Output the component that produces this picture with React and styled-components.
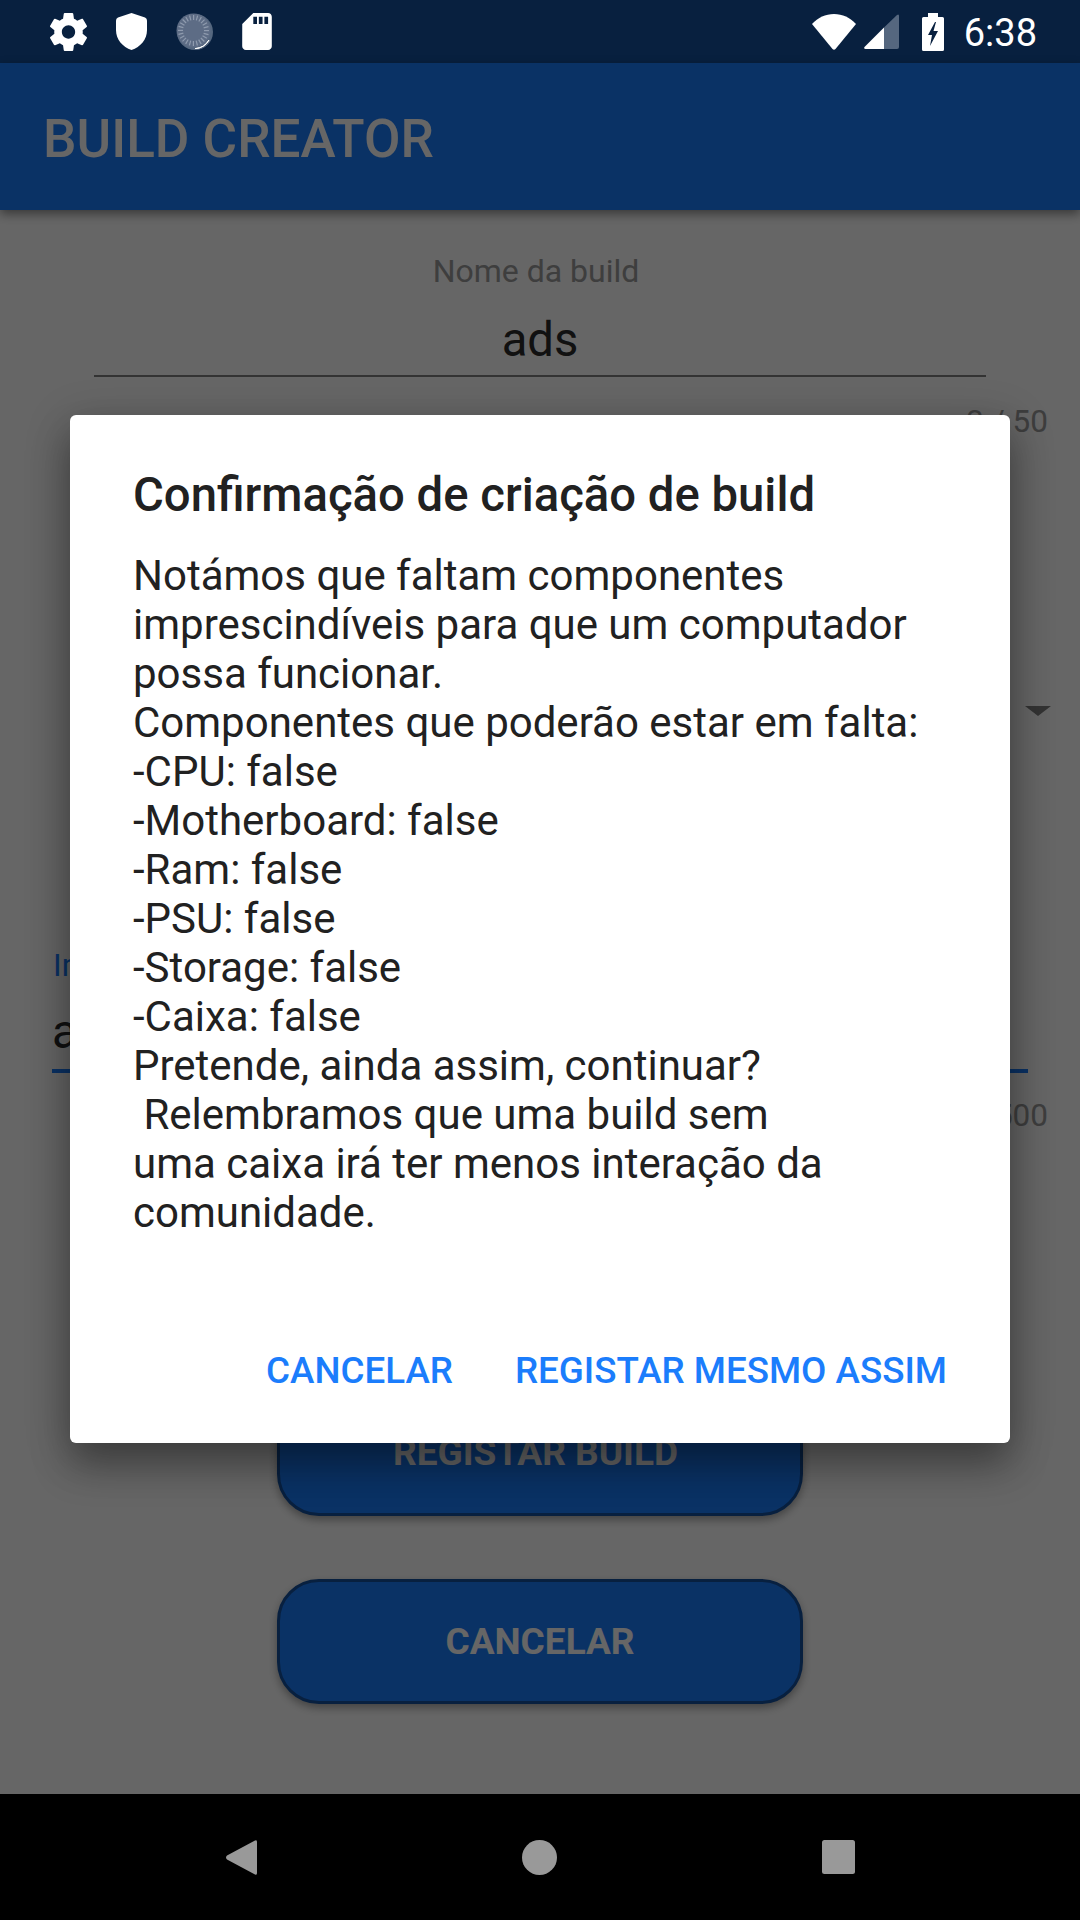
import React from 'react';
import styled, { createGlobalStyle } from 'styled-components';

const GlobalStyle = createGlobalStyle`
  html, body {
    margin: 0;
    padding: 0;
    background: #000;
  }
  * {
    box-sizing: border-box;
  }
`;

const Screen = styled.div`
  width: 1080px;
  height: 1920px;
  display: flex;
  flex-direction: column;
  overflow: hidden;
  font-family: Roboto, "Liberation Sans", sans-serif;
`;

const StatusBar = styled.div`
  height: 63px;
  flex: none;
  display: flex;
  align-items: center;
  justify-content: space-between;
  padding: 0 43px 0 50px;
  background: #08203f;
`;

const IconGroup = styled.div`
  display: flex;
  align-items: center;
  gap: ${(p) => p.$gap}px;
  margin-left: ${(p) => p.$offset || 0}px;
`;

const Clock = styled.span`
  margin-left: 20px;
  padding-top: 3px;
  color: #fff;
  font-size: 38px;
  line-height: 60px;
`;

const Content = styled.div`
  position: relative;
  flex: 1;
  display: flex;
  flex-direction: column;
  background: #fff;
`;

const AppBar = styled.header`
  height: 147px;
  flex: none;
  display: flex;
  align-items: center;
  padding: 4px 0 0 43px;
  background: #1b7dfc;
  color: #fff;
  font-size: 53px;
  font-weight: 500;
  box-shadow: 0 4px 10px rgba(0, 0, 0, 0.45);
`;

const Form = styled.main`
  flex: 1;
  display: flex;
  flex-direction: column;
  padding-top: 41px;
`;

const FieldLabel = styled.label`
  display: block;
  font-size: 32px;
  line-height: 40px;
  color: ${(p) => (p.$focused ? '#1b7dfc' : '#9b9b9b')};
  text-align: ${(p) => (p.$focused ? 'left' : 'center')};
  padding: ${(p) => (p.$focused ? '0 0 0 53px' : '0 8px 0 0')};
`;

const InputValue = styled.div`
  margin: ${(p) => (p.$focused ? '20px 52px 0' : '20px 94px 0')};
  height: ${(p) => (p.$focused ? '68px' : '66px')};
  line-height: ${(p) => (p.$focused ? '55px' : '58px')};
  font-size: 47.25px;
  color: #2b2b2b;
  text-align: ${(p) => (p.$focused ? 'left' : 'center')};
  border-bottom: ${(p) => (p.$focused ? '4px solid #1b7dfc' : '2px solid #808080')};
`;

const Counter = styled.div`
  margin-top: ${(p) => (p.$tight ? '23px' : '25px')};
  padding-right: 32px;
  text-align: right;
  font-size: 31.5px;
  line-height: 40px;
  color: #9b9b9b;
`;

const SelectRow = styled.div`
  height: 60px;
  margin: 239px 0 204px;
  display: flex;
  align-items: center;
  justify-content: flex-end;
  padding-right: 29px;
`;

const SelectArrow = styled.span`
  width: 0;
  height: 0;
  border-left: 13px solid transparent;
  border-right: 13px solid transparent;
  border-top: 10px solid #808080;
`;

const Actions = styled.div`
  display: flex;
  flex-direction: column;
  align-items: center;
  gap: 63px;
  margin-top: 255px;
`;

const PrimaryButton = styled.button`
  width: 526px;
  height: 125px;
  padding: ${(p) => (p.$shifted ? '0 9px 2px 0' : '0')};
  border: 3px solid #14509f;
  border-radius: 42px;
  background: #1b7dfc;
  color: #fff;
  font-family: inherit;
  font-size: 37px;
  font-weight: 700;
  box-shadow: 0 4px 8px rgba(0, 0, 0, 0.35);
`;

const Scrim = styled.div`
  position: absolute;
  inset: 0;
  display: flex;
  align-items: center;
  justify-content: center;
  background: rgba(0, 0, 0, 0.6);
`;

const Dialog = styled.section`
  width: 940px;
  height: 1028px;
  display: flex;
  flex-direction: column;
  padding: 48px 63px 0 63px;
  background: #fff;
  border-radius: 6px;
  box-shadow: 0 24px 38px rgba(0, 0, 0, 0.28), 0 9px 46px rgba(0, 0, 0, 0.24);
`;

const DialogTitle = styled.h2`
  margin: 0;
  font-size: 47.25px;
  line-height: 64px;
  font-weight: 500;
  color: #212121;
`;

const DialogBody = styled.p`
  margin: 24px 0 0;
  flex: 1;
  font-size: 42px;
  line-height: 49px;
  color: #212121;
  white-space: pre-wrap;
`;

const DialogActions = styled.div`
  display: flex;
  justify-content: flex-end;
  gap: 62px;
  padding-bottom: 49px;
`;

const TextButton = styled.button`
  padding: 0;
  border: 0;
  background: none;
  color: #1b7dfc;
  font-family: inherit;
  font-size: 36.75px;
  line-height: 46px;
  font-weight: 500;
`;

const NavBar = styled.nav`
  height: 126px;
  flex: none;
  display: flex;
  align-items: center;
  justify-content: center;
  gap: 265px;
  background: #000;
`;

const GearIcon = () => (
  <svg width="37" height="38" viewBox="2.6 2 18.8 20" fill="#fff">
    <path d="M19.43 12.98c.04-.32.07-.64.07-.98s-.03-.66-.07-.98l2.11-1.65c.19-.15.24-.42.12-.64l-2-3.46c-.12-.22-.39-.3-.61-.22l-2.49 1c-.52-.4-1.08-.73-1.69-.98l-.38-2.65C14.46 2.18 14.25 2 14 2h-4c-.25 0-.46.18-.49.42l-.38 2.65c-.61.25-1.17.59-1.69.98l-2.49-1c-.23-.09-.49 0-.61.22l-2 3.46c-.13.22-.07.49.12.64l2.11 1.65c-.04.32-.07.65-.07.98s.03.66.07.98l-2.11 1.65c-.19.15-.24.42-.12.64l2 3.46c.12.22.39.3.61.22l2.49-1c.52.4 1.08.73 1.69.98l.38 2.65c.03.24.24.42.49.42h4c.25 0 .46-.18.49-.42l.38-2.65c.61-.25 1.17-.59 1.69-.98l2.49 1c.23.09.49 0 .61-.22l2-3.46c.12-.22.07-.49-.12-.64l-2.11-1.65zM12 15.5c-1.93 0-3.5-1.57-3.5-3.5s1.57-3.5 3.5-3.5 3.5 1.57 3.5 3.5-1.57 3.5-3.5 3.5z" />
  </svg>
);

const ShieldIcon = () => (
  <svg width="31" height="37" viewBox="0 0 31 37" fill="#fff">
    <path d="M15.5 0 L29 4.6 Q31 5.4 31 7.5 V17 C31 26.5 24.5 34 15.5 37 C6.5 34 0 26.5 0 17 V7.5 Q0 5.4 2 4.6 Z" />
  </svg>
);

const ticks = Array.from({ length: 24 }, (_, i) => i * 15);

const SpinnerIcon = () => (
  <svg width="37" height="37" viewBox="0 0 37 37">
    <circle cx="19" cy="19" r="18" fill="#55677f" />
    <path d="M33 27 A17.6 17.6 0 0 1 19 35.6 A17 17 0 0 0 33 27 Z" fill="#fff" stroke="#fff" strokeWidth="1" />
    <circle cx="17.5" cy="17.5" r="17" fill="#5d6c85" />
    {ticks.map((deg) => (
      <rect key={deg} x="17" y="2" width="1.2" height="5" fill="#8f9bae" transform={`rotate(${deg} 17.5 17.5)`} />
    ))}
  </svg>
);

const SdCardIcon = () => (
  <svg width="30" height="37" viewBox="4 2 16 20" fill="#fff">
    <path d="M18 2h-8L4.02 8 4 20c0 1.1.9 2 2 2h12c1.1 0 2-.9 2-2V4c0-1.1-.9-2-2-2zm-6 6h-2V4h2v4zm3 0h-2V4h2v4zm3 0h-2V4h2v4z" />
  </svg>
);

const WifiIcon = () => (
  <svg width="44" height="36" viewBox="0 0 44 36" fill="#fff">
    <path d="M0 10 C6 3.5 13.5 0 22 0 C30.5 0 38 3.5 44 10 L23.5 35 Q22 36.5 20.5 35 Z" />
  </svg>
);

const SignalIcon = () => (
  <svg width="35" height="35" viewBox="0 0 35 35">
    <path d="M20 13.5 L33 1 Q35 -0.5 35 2 V33 Q35 35 33 35 H20 Z" fill="#55677f" />
    <path d="M20 13.5 V35 H1.5 Q-0.5 35 0.5 33 Z" fill="#fff" />
  </svg>
);

const BatteryIcon = () => (
  <svg width="22" height="38" viewBox="0 0 22 38">
    <path d="M6 0 H16 V4 H20.5 Q22 4 22 5.5 V36.5 Q22 38 20.5 38 H1.5 Q0 38 0 36.5 V5.5 Q0 4 1.5 4 H6 Z" fill="#fff" />
    <path d="M13 9 L6 22 H10 L8 33 L16 18 H11.5 L14 9 Z" fill="#08203f" />
  </svg>
);

const BackIcon = () => (
  <svg width="31" height="35" viewBox="0 0 31 35" fill="#999">
    <path d="M29 0.6 Q31 -0.6 31 2 V33 Q31 35.6 29 34.4 L1 19.5 Q-1 17.5 1 15.5 Z" />
  </svg>
);

const HomeIcon = () => (
  <svg width="35" height="35" viewBox="0 0 35 35" fill="#999">
    <circle cx="17.5" cy="17.5" r="17.5" />
  </svg>
);

const RecentsIcon = () => (
  <svg width="33" height="34" viewBox="0 0 33 34" fill="#999">
    <rect width="33" height="34" rx="2.5" />
  </svg>
);

const message = `Notámos que faltam componentes
imprescindíveis para que um computador
possa funcionar.
Componentes que poderão estar em falta:
-CPU: false
-Motherboard: false
-Ram: false
-PSU: false
-Storage: false
-Caixa: false
Pretende, ainda assim, continuar?
 Relembramos que uma build sem
uma caixa irá ter menos interação da
comunidade.`;

const App = () => {
  return (
    <Screen>
      <GlobalStyle />
      <StatusBar>
        <IconGroup $gap={29}>
          <GearIcon />
          <ShieldIcon />
          <SpinnerIcon />
          <SdCardIcon />
        </IconGroup>
        <IconGroup $gap={8}>
          <WifiIcon />
          <SignalIcon />
          <IconGroup $gap={0} $offset={15}>
            <BatteryIcon />
            <Clock>6:38</Clock>
          </IconGroup>
        </IconGroup>
      </StatusBar>
      <Content>
        <AppBar>BUILD CREATOR</AppBar>
        <Form>
          <FieldLabel>Nome da build</FieldLabel>
          <InputValue>ads</InputValue>
          <Counter>3 / 50</Counter>
          <SelectRow>
            <SelectArrow />
          </SelectRow>
          <FieldLabel $focused>Imagem</FieldLabel>
          <InputValue $focused>ads</InputValue>
          <Counter $tight>3 / 500</Counter>
          <Actions>
            <PrimaryButton $shifted>REGISTAR BUILD</PrimaryButton>
            <PrimaryButton>CANCELAR</PrimaryButton>
          </Actions>
        </Form>
        <Scrim>
          <Dialog>
            <DialogTitle>Confirmação de criação de build</DialogTitle>
            <DialogBody>{message}</DialogBody>
            <DialogActions>
              <TextButton>CANCELAR</TextButton>
              <TextButton>REGISTAR MESMO ASSIM</TextButton>
            </DialogActions>
          </Dialog>
        </Scrim>
      </Content>
      <NavBar>
        <BackIcon />
        <HomeIcon />
        <RecentsIcon />
      </NavBar>
    </Screen>
  );
};

export default App;
